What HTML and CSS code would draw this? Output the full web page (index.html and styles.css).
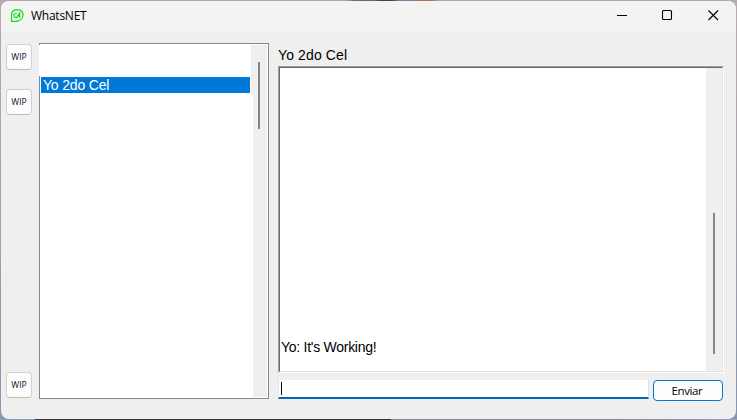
FILE: index.html
```html
<!DOCTYPE html>
<html lang="es">
<head>
<meta charset="utf-8">
<title>WhatsNET</title>
<link rel="stylesheet" href="styles.css">
</head>
<body>
<div class="window">
  <header class="titlebar">
    <svg class="logo" width="14" height="14" viewBox="0 0 14 14" fill="none" stroke="#08df20" stroke-width="1.2">
      <path d="M1.500 12.300V5.200C1.900 2.600 4 .8 5.500.8h3.500c2 0 4 2.200 4 5s-2 5.200-4 5.700l-1.500.8z"/>
      <path d="M6.700 4.600C5 3.600 3.700 5 3.900 6.500c.2 1.900 1.600 2.500 3 1.500M6.800 8.800L9.600 4v4.700M7.800 7h2.700"/>
    </svg>
    <h1 class="title">WhatsNET</h1>
    <div class="controls">
      <svg width="46" height="30" viewBox="0 0 46 30"><path d="M18 14.500h10"/></svg>
      <svg width="46" height="30" viewBox="0 0 46 30"><rect x="17.500" y="9.500" width="9" height="9" rx="1"/></svg>
      <svg width="46" height="30" viewBox="0 0 46 30"><path d="M17.500 9.500l9.500 9.500M27 9.500l-9.500 9.500"/></svg>
    </div>
  </header>
  <main class="content">
    <nav class="rail">
      <button class="wip">WIP</button>
      <button class="wip">WIP</button>
      <button class="wip wip-last">WIP</button>
    </nav>
    <section class="contacts">
      <ul class="contact-list">
        <li class="contact blank"></li>
        <li class="contact selected">Yo 2do Cel</li>
      </ul>
      <div class="track"><div class="track-head"></div><div class="thumb"></div></div>
    </section>
    <section class="chat">
      <h2 class="chat-name">Yo 2do Cel</h2>
      <div class="log">
        <div class="messages"><p class="message">Yo: It's Working!</p></div>
        <div class="log-track"><div class="thumb"></div></div>
      </div>
      <div class="composer">
        <div class="entry"><span class="caret"></span></div>
        <button class="send"><span>Enviar</span></button>
      </div>
    </section>
  </main>
</div>
</body>
</html>
```
FILE: styles.css
```css
* { box-sizing: border-box; }
body {
  margin: 0;
  padding: 1px;
  height: 420px;
  overflow: hidden;
  background:
    linear-gradient(90deg, #b3a8ad 0 344px, #716570 355px 373px, #45404d 380px 392px, #7785a7 400px 410px, #a0785d 420px 433px, #b3a8ad 440px) 0 0 / 737px 1px no-repeat,
    linear-gradient(90deg, #8c9bb5 0 34px, #343035 36px 390px, #8c8890 392px 600px, #9a9cb4 737px) 0 419px / 737px 1px no-repeat,
    linear-gradient(#b8abb0, #a6a0a8 50%, #8795b0);
  font-family: "Liberation Sans", Arial, sans-serif;
  color: #000;
}
.window {
  display: flex;
  flex-direction: column;
  width: 735px;
  height: 418px;
  border-radius: 8px;
  overflow: hidden;
  background: #efefef;
}
.titlebar {
  display: flex;
  align-items: center;
  height: 30px;
  flex: none;
  padding-left: 9px;
  background: #f3f3f3;
}
.logo { flex: none; }
.title {
  margin: 0 0 0 7px;
  font: 400 12px/16px "Open Sans", sans-serif;
  letter-spacing: -0.25px;
}
.controls { display: flex; margin: 0 -1px 0 auto; }
.controls svg { display: block; fill: none; stroke: #000; stroke-width: 1.1; }
.content { display: flex; flex: 1; padding: 12px 12px 18px 5px; }
.rail { display: flex; flex-direction: column; width: 26px; height: 356px; margin-right: 7px; }
.wip {
  width: 26px;
  height: 26px;
  margin: 1px 0 18px;
  padding: 0 0 1px;
  border: 1px solid #d0d0d0;
  border-bottom-color: #bcbcbc;
  border-radius: 4px;
  background: #fdfdfd;
  color: #001030;
  font: 400 8.5px/20px "Open Sans", sans-serif;
  letter-spacing: 0;
}
.wip-last { margin: auto 0 1px; }
.contacts {
  display: flex;
  width: 230px;
  height: 356px;
  padding: 1px;
  border: 1px solid #828790;
  background: #fff;
}
.contact-list { flex: 1; margin: 0; padding: 0; list-style: none; }
.contact.blank { height: 31px; margin: 0 0 1px -2px; background: #fff; }
.contact.selected {
  height: 16px;
  width: 209px;
  padding-left: 2px;
  background: #0078d7;
  color: #fff;
  font-size: 14px;
  line-height: 17px;
  letter-spacing: -0.18px;
}
.track {
  display: flex;
  flex-direction: column;
  width: 14px;
  height: 352px;
  background: #efefef;
}
.track-head { width: 16px; height: 17px; margin-left: -2px; padding-bottom: 50px; margin-bottom: -33px; background: #efefef; }
.thumb { width: 2px; background: #858585; }
.track .thumb { height: 67px; margin-left: 5px; }
.chat { width: 446px; margin-left: 9px; }
.chat-name {
  height: 23px;
  margin: 0;
  padding-top: 4px;
  font-size: 14px;
  font-weight: 400;
  line-height: 17px;
  letter-spacing: 0.12px;
}
.log {
  display: flex;
  width: 446px;
  height: 307px;
  border: 1px solid;
  border-color: #a0a0a0 #fff #fff #a0a0a0;
}
.messages {
  display: flex;
  flex: 1;
  align-items: flex-end;
  border: solid;
  border-width: 1px 0 1px 1px;
  border-color: #696969 #fff #e3e3e3 #696969;
  background: #fff;
}
.message { margin: 0 0 16px 1px; font-size: 14px; line-height: 16px; letter-spacing: -0.27px; white-space: nowrap; }
.log-track {
  width: 17px;
  padding: 145px 0 0 7px;
  border: 1px solid;
  border-width: 1px 1px 1px 0;
  border-color: #696969 #e3e3e3 #e3e3e3;
  background: #efefef;
}
.log-track .thumb { height: 141px; }
.composer { display: flex; gap: 4px; margin-top: 7px; }
.entry {
  width: 371px;
  height: 19px;
  padding: 2px 0 0 3px;
  border-left: 1px solid #e5e5e5;
  border-right: 1px solid #e0e0e0;
  border-bottom: 2px solid #0067c0;
  background: #fff;
}
.caret { display: block; width: 1px; height: 13px; margin-left: -1px; background: #000; }
.send {
  width: 70px;
  height: 21px;
  padding: 0 2px 0 0;
  border: 1px solid #0078d4;
  border-radius: 4px;
  background: #fdfdfd;
  color: #000;
  font: 400 11.5px/19px "Open Sans", sans-serif;
  letter-spacing: -0.4px;
}
```
